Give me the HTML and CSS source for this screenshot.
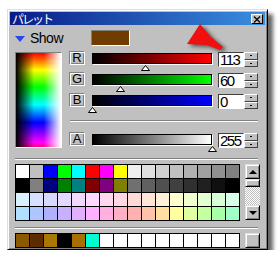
FILE: index.html
```html
<!DOCTYPE html>
<html>
<head>
  <meta charset="utf-8">
  <title>パレット</title>
  <link rel="stylesheet" href="styles.css">
</head>
<body>

  <div class="window">
    <div class="titlebar">
      <span class="title">パレット</span>
      <button class="close">
        <svg width="8" height="7" viewBox="0 0 8 7"><path d="M1 0.5 L7 6.5 M7 0.5 L1 6.5" stroke="#000" stroke-width="1.2"/></svg>
      </button>
    </div>

    <div class="panel">
      <div class="show-row">
        <span class="tri"></span>
        <span class="show">Show</span>
        <span class="swatch"></span>
      </div>

      <div class="main">
        <div class="spectrum"></div>
        <div class="sliders">
          <div class="row">
            <span class="label">R</span>
            <div class="track"><div class="bar bar-r"></div><span class="thumb" data-v="113"></span></div>
            <div class="num"><span class="val">113</span><span class="spin"><i></i><i></i></span></div>
          </div>
          <div class="row">
            <span class="label">G</span>
            <div class="track"><div class="bar bar-g"></div><span class="thumb" data-v="60"></span></div>
            <div class="num"><span class="val">60</span><span class="spin"><i></i><i></i></span></div>
          </div>
          <div class="row">
            <span class="label">B</span>
            <div class="track"><div class="bar bar-b"></div><span class="thumb" data-v="0"></span></div>
            <div class="num"><span class="val">0</span><span class="spin"><i></i><i></i></span></div>
          </div>
          <div class="sep sep-short"></div>
          <div class="row">
            <span class="label">A</span>
            <div class="track"><div class="bar bar-a"></div><span class="thumb" data-v="255"></span></div>
            <div class="num"><span class="val">255</span><span class="spin"><i></i><i></i></span></div>
          </div>
        </div>
      </div>

      <div class="sep sep-wide"></div>

      <div class="palette-row">
        <div id="grid" class="grid"></div>
        <div class="scroll">
          <span class="sbtn"><b class="up"></b></span>
          <span class="sthumb"></span>
          <span class="strack"></span>
          <span class="sbtn"><b class="down"></b></span>
        </div>
      </div>

      <div class="sep sep-wide sep-low"></div>

      <div class="recent-row">
        <div id="recent" class="grid recent"></div>
        <span class="plain-btn"></span>
      </div>
    </div>
  </div>

  <svg class="arrow" width="46" height="36" viewBox="0 0 46 36">
    <polygon points="15,4 26,17 38,27 35,30 22,25 2,24" fill="#f01010"/>
  </svg>

  <script>
    // palette data
    const palette = [
      '#ffffff','#c0c0c0','#0000ff','#00ff00','#00ffff','#ff0000','#ff00ff','#ffff00',
      '#f0f0f0','#e0e0e0','#d0d0d0','#c0c0c0','#b0b0b0','#a0a0a0','#909090','#808080',
      '#000000','#808080','#000080','#008000','#008080','#800000','#800080','#808000',
      '#707070','#606060','#505050','#404040','#303030','#202020','#101010','#000000',
      '#d8f0ff','#d8e0ff','#d8d8ff','#e4d8ff','#f0d8ff','#ffd8ff','#ffd8f0','#ffd8e4',
      '#ffd8d8','#ffe4d8','#fff0d8','#ffffd0','#f0ffd0','#e4ffd0','#d8ffd8','#d8ffe8',
      '#b0e0ff','#b0c4ff','#b0b0ff','#c8b0ff','#e0b0ff','#ffb0ff','#ffb0e0','#ffb0c4',
      '#ffb0b0','#ffc4a8','#ffe0a0','#ffffa0','#e0ffa0','#c4ffa0','#a8ffa8','#a0ffc8'
    ];
    const recent = ['#8b5a00','#5a2c00','#a87800','#000000','#a87000','#00ffd0'];

    function fill(el, colors, count) {
      for (let i = 0; i < count; i++) {
        const c = document.createElement('span');
        c.style.background = colors[i] || '#ffffff';
        el.appendChild(c);
      }
    }
    fill(document.getElementById('grid'), palette, 64);
    fill(document.getElementById('recent'), recent, 16);

    // slider thumbs
    document.querySelectorAll('.thumb').forEach(t => {
      t.style.left = Math.round(t.dataset.v / 255 * 120) + 'px';
      t.innerHTML = '<svg width="9" height="6"><polygon points="4.5,0.5 8.5,5.5 0.5,5.5" fill="#fff" stroke="#000"/></svg>';
    });
  </script>
</body>
</html>
```

FILE: styles.css
```css
body {
  margin: 0;
  padding: 9px 0 0 7px;
  background: #fff;
  font-family: "Liberation Sans", Arial, sans-serif;
  position: relative;
}
.window {
  width: 255px;
  height: 235px;
  padding: 2px;
  background: #c0c0c0;
  border: 1px solid;
  border-color: #dfdfdf #000 #000 #dfdfdf;
  box-shadow: inset 1px 1px #fff, inset -1px -1px #808080, 5px 5px 4px rgba(0,0,0,0.6);
}
.titlebar {
  height: 13px;
  display: flex;
  align-items: center;
  justify-content: space-between;
  padding: 0 2px;
  background: linear-gradient(to right, #081c88, #3a8ee0);
}
.title {
  color: #fff;
  font-family: "Noto Sans CJK JP", sans-serif;
  font-size: 12px;
  line-height: 13px;
  letter-spacing: -2px;
}
.close {
  width: 12px;
  height: 10px;
  padding: 0;
  margin-top: 1px;
  display: flex;
  align-items: center;
  justify-content: center;
  background: #c0c0c0;
  border: 1px solid;
  border-color: #fff #000 #000 #fff;
}
.panel {
  padding: 5px 5px 0 5px;
}
.show-row {
  display: flex;
  align-items: center;
  height: 16px;
}
.tri {
  width: 0;
  height: 0;
  margin-top: 2px;
  border-left: 5px solid transparent;
  border-right: 5px solid transparent;
  border-top: 6px solid #2848e8;
}
.show {
  width: 61px;
  margin-left: 5px;
  font-size: 14px;
  letter-spacing: -0.5px;
}
.swatch {
  width: 37px;
  height: 14px;
  background: #713c00;
  border: 1px solid;
  border-color: #808080 #fff #fff #808080;
}
.main {
  display: flex;
  margin-top: 4px;
}
.spectrum {
  width: 47px;
  height: 96px;
  margin-top: 2px;
  box-sizing: border-box;
  border: 1px solid;
  border-color: #808080 #fff #fff #808080;
  background:
    linear-gradient(to right, #000, rgba(0,0,0,0) 40%, rgba(255,255,255,0) 62%, #fff),
    linear-gradient(to bottom, #f00, #ff0 18%, #0f0 36%, #0ff 55%, #00f 74%, #f0f 95%, #f08);
}
.sliders {
  margin-left: 7px;
  width: 189px;
  padding-top: 1px;
}
.row {
  display: flex;
  align-items: flex-start;
  height: 21px;
}
.label {
  width: 16px;
  height: 14px;
  box-sizing: border-box;
  border: 1px solid;
  border-color: #808080 #fff #fff #808080;
  box-shadow: inset 1px 1px #fff, inset -1px -1px #808080;
  font-size: 13px;
  line-height: 12px;
  text-align: center;
}
.track {
  position: relative;
  width: 120px;
  margin: 2px 0 0 7px;
}
.bar {
  height: 11px;
  box-sizing: border-box;
  border: 1px solid #000;
  box-shadow: 1px 1px #fff;
}
.bar-r { background: linear-gradient(to right, #000, #f00); }
.bar-g { background: linear-gradient(to right, #000, #0f0); }
.bar-b { background: linear-gradient(to right, #000, #00f); }
.bar-a { background: linear-gradient(to right, #000, #fff); }
.thumb {
  position: absolute;
  top: 12px;
  margin-left: -4px;
  line-height: 0;
}
.num {
  display: flex;
  margin: 1px 0 0 6px;
  height: 15px;
}
.val {
  width: 23px;
  height: 13px;
  background: #fff;
  border: 1px solid;
  border-color: #404040 #fff #fff #404040;
  font-size: 15px;
  line-height: 13px;
  padding-left: 1px;
  letter-spacing: -1.5px;
}
.spin {
  width: 14px;
  display: flex;
  flex-direction: column;
}
.spin i {
  flex: 1;
  position: relative;
  border: 1px solid;
  border-color: #fff #404040 #404040 #fff;
}
.spin i::after {
  content: "";
  position: absolute;
  left: 5px;
  top: 2px;
  width: 2px;
  height: 1px;
  background: #000;
}
.sep {
  height: 0;
  border-top: 1px solid #808080;
  border-bottom: 1px solid #fff;
}
.sep-short {
  margin: 6px 0 10px 1px;
}
.sep-wide {
  width: 243px;
  margin-top: 5px;
}
.sep-low {
  margin-top: 6px;
}
.palette-row {
  display: flex;
  margin-top: 4px;
}
.grid {
  display: grid;
  grid-template-columns: repeat(16, 13px);
  grid-auto-rows: 13px;
  gap: 1px;
  padding: 1px;
  background: #000;
}
.scroll {
  width: 15px;
  height: 56px;
  margin-left: 5px;
  display: flex;
  flex-direction: column;
}
.sbtn, .sthumb, .plain-btn {
  box-sizing: border-box;
  background: #c0c0c0;
  border: 1px solid;
  border-color: #dfdfdf #000 #000 #dfdfdf;
  box-shadow: inset 1px 1px #fff, inset -1px -1px #808080;
}
.sbtn {
  height: 15px;
  display: flex;
  align-items: center;
  justify-content: center;
}
.sthumb {
  height: 8px;
}
.strack {
  flex: 1;
  background: repeating-conic-gradient(#fff 0 25%, #c0c0c0 0 50%) 0 0 / 2px 2px;
}
.up, .down {
  width: 0;
  height: 0;
  border-left: 4px solid transparent;
  border-right: 4px solid transparent;
}
.up { border-bottom: 4px solid #000; }
.down { border-top: 4px solid #000; }
.recent-row {
  display: flex;
  margin-top: 4px;
}
.plain-btn {
  width: 15px;
  height: 15px;
  margin-left: 5px;
}
.arrow {
  position: absolute;
  left: 185px;
  top: 20px;
  filter: drop-shadow(3px 2px 2px rgba(0,0,0,0.6));
}
```
